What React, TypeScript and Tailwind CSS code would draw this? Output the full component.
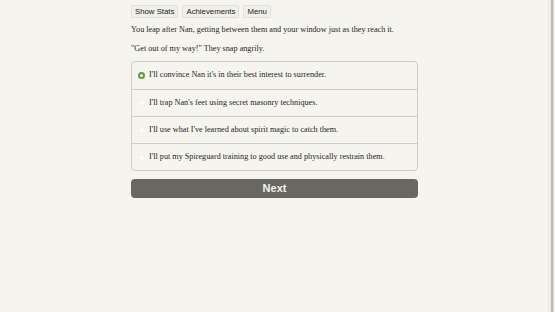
import React from "react";

const options = [
  "I'll convince Nan it's in their best interest to surrender.",
  "I'll trap Nan's feet using secret masonry techniques.",
  "I'll use what I've learned about spirit magic to catch them.",
  "I'll put my Spireguard training to good use and physically restrain them.",
];

export default function App() {
  return (
    <div className="flex h-[312px] w-full bg-[#f5f4ef]">
      <div className="flex-1">
        <div className="ml-[131px] w-[287px] pt-[5px]">
          <div className="flex gap-[4px]" style={{ fontFamily: '"Liberation Sans", Arial, sans-serif' }}>
            <button className="h-[13px] rounded-[2px] border border-[#e2e0da] bg-[#f0efea] px-[3px] text-[7.8px] leading-[11px] text-[#222]">Show Stats</button>
            <button className="h-[13px] rounded-[2px] border border-[#e2e0da] bg-[#f0efea] px-[3px] text-[7.8px] leading-[11px] text-[#222]">Achievements</button>
            <button className="h-[13px] rounded-[2px] border border-[#e2e0da] bg-[#f0efea] px-[3px] text-[7.8px] leading-[11px] text-[#222]">Menu</button>
          </div>
          <div style={{ fontFamily: '"Liberation Serif", "Times New Roman", serif' }} className="text-[8.2px] text-[#1f1f1f]">
            <p className="mt-[6px] leading-[12px]">You leap after Nan, getting between them and your window just as they reach it.</p>
            <p className="mt-[7px] leading-[12px]">"Get out of my way!" They snap angrily.</p>
            <div className="mt-[6px] rounded-[4px] border border-[#cfcdc7]">
              {options.map((o, i) => (
                <div key={i} className={`flex h-[27px] items-center pl-[6px] ${i > 0 ? "border-t border-[#cfcdc7]" : ""}`}>
                  {i === 0 ? (
                    <span className="mr-[4px] h-[7px] w-[7px] rounded-full border-[2px] border-[#5f9a3d] bg-white" />
                  ) : (
                    <span className="mr-[4px] h-[7px] w-[7px] rounded-full border border-[#f2f1ec] bg-[#fbfaf7]" />
                  )}
                  <span>{o}</span>
                </div>
              ))}
            </div>
          </div>
          <button
            className="mt-[8px] flex h-[19px] w-full items-center justify-center rounded-[4px] bg-[#686762] text-[11px] font-bold text-[#f3f2ee]"
            style={{ fontFamily: '"Liberation Sans", Arial, sans-serif' }}
          >
            Next
          </button>
        </div>
      </div>
      <div className="flex w-[10px]">
        <div className="w-[4px] border-r border-[#e6e5df]" />
        <div className="w-[2px] border-r border-[#e9e8e2]" />
        <div className="w-[2px] bg-[#b8b8b6]" />
        <div className="w-[1px] bg-[#dcdcda]" />
      </div>
    </div>
  );
}
